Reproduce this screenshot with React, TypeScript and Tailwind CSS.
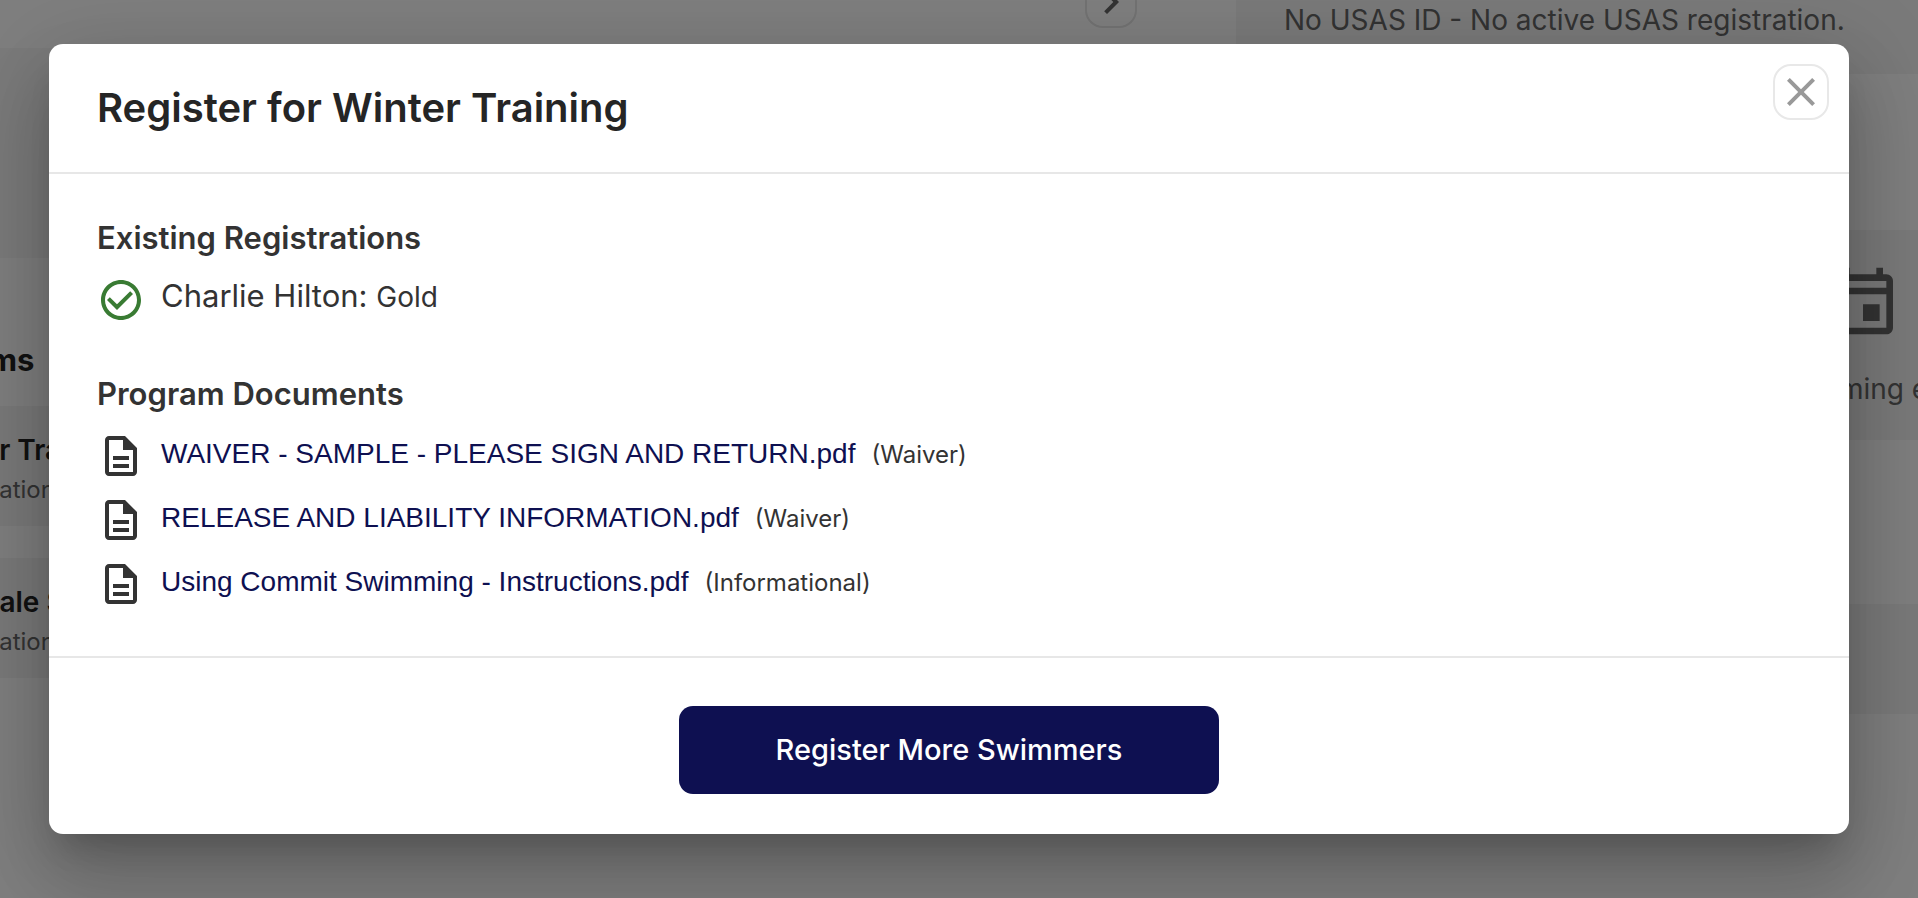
import React from 'react';
import { MdCheckCircleOutline, MdChevronRight, MdClose, MdOutlineDescription, MdOutlineEvent } from 'react-icons/md';

interface ProgramDocument {
  name: string;
  kind: string;
}

const documents: ProgramDocument[] = [
  { name: 'WAIVER - SAMPLE - PLEASE SIGN AND RETURN.pdf', kind: 'Waiver' },
  { name: 'RELEASE AND LIABILITY INFORMATION.pdf', kind: 'Waiver' },
  { name: 'Using Commit Swimming - Instructions.pdf', kind: 'Informational' },
];

const programs = ['Winter Training', 'Glendale Swim'];

const Dashboard: React.FC = () => (
  <div className="flex h-full justify-between overflow-hidden bg-white text-[#666]">
    {/* Programs column */}
    <div className="w-[1137px] shrink-0">
      <div className="flex h-12 items-end justify-end">
        <button
          aria-label="Next"
          className="mb-5 flex size-[52px] shrink-0 items-center justify-center rounded-[18px] border-2 border-[#e6e6e6] text-[#666]"
        >
          <MdChevronRight size={48} />
        </button>
      </div>
      <div className="h-[210px] bg-[#f7f7f7]" />
      {/* The list is scrolled past the left edge */}
      <div className="-ml-28 w-[400px] pt-20">
        <h2 className="text-[31px] leading-11 font-bold text-[#222]">Programs</h2>
        {programs.map((name) => (
          <div key={name} className="mt-6 mb-8 h-[120px] bg-[#f5f5f5] px-8 pt-6">
            <p className="text-[28px] leading-10 font-semibold whitespace-nowrap text-[#222]">{name}</p>
            <p className="text-2xl leading-10">Registration</p>
          </div>
        ))}
      </div>
    </div>

    {/* Account column */}
    <div className="w-[682px] shrink-0">
      <div className="h-[74px] bg-[#f5f5f5] pl-12 text-[28px] leading-10 whitespace-nowrap">
        No USAS ID - No active USAS registration.
      </div>
      <div className="mt-[156px] flex h-[210px] w-[1254px] flex-col items-center justify-center gap-7 bg-[#f5f5f5]">
        <MdOutlineEvent size={80} />
        <p className="text-[28px] leading-10">No upcoming events</p>
      </div>
      <div className="mt-[164px] h-[110px] bg-[#f5f5f5]" />
    </div>
  </div>
);

const DocumentRow: React.FC<{ doc: ProgramDocument }> = ({ doc }) => (
  <li className="flex h-12 items-start gap-4">
    <MdOutlineDescription size={48} className="shrink-0" />
    <p className="flex items-baseline gap-4">
      <a href="#" className="font-['Liberation_Sans',Arial,sans-serif] text-[28px] leading-11 text-[#0e1051]">
        {doc.name}
      </a>
      <span className="text-2xl">({doc.kind})</span>
    </p>
  </li>
);

const App: React.FC = () => (
  <div className="relative h-screen overflow-hidden font-['Inter',sans-serif]">
    <Dashboard />
    <div className="absolute inset-0 bg-black/50 pt-11 pr-[69px] pl-[49px]">
      <section
        role="dialog"
        aria-labelledby="dialog-title"
        className="relative rounded-[14px] bg-white text-[#333] shadow-[0_22px_30px_-14px_rgba(0,0,0,0.2),0_48px_76px_6px_rgba(0,0,0,0.14),0_18px_92px_16px_rgba(0,0,0,0.12)]"
      >
        <button
          aria-label="Close"
          className="absolute top-5 right-5 flex size-14 items-center justify-center rounded-[18px] border-2 border-[#e8e8e8] text-[#999]"
        >
          <MdClose size={48} />
        </button>
        <header className="border-b-2 border-[#e7e7e7] px-12 py-9">
          <h1 id="dialog-title" className="text-[40px] leading-14 font-semibold text-[#252525]">
            Register for Winter Training
          </h1>
        </header>
        <div className="px-12 pt-[42px] pb-12">
          <h2 className="text-[31px] leading-11 font-semibold">Existing Registrations</h2>
          <div className="mt-4 flex h-12 items-start gap-4">
            <MdCheckCircleOutline size={48} className="shrink-0 text-[#397b33]" />
            <p className="text-[31px] leading-10">
              Charlie Hilton: <span className="text-[28px]">Gold</span>
            </p>
          </div>
          <h2 className="mt-12 text-[31px] leading-11 font-semibold">Program Documents</h2>
          <ul className="mt-4 flex flex-col gap-4">
            {documents.map((doc) => (
              <DocumentRow key={doc.name} doc={doc} />
            ))}
          </ul>
        </div>
        <footer className="flex justify-center border-t-2 border-[#e7e7e7] pt-12 pb-10">
          <button className="h-[88px] w-[540px] rounded-[14px] bg-[#0e1051] text-[29px] font-medium text-white">
            Register More Swimmers
          </button>
        </footer>
      </section>
    </div>
  </div>
);

export default App;
